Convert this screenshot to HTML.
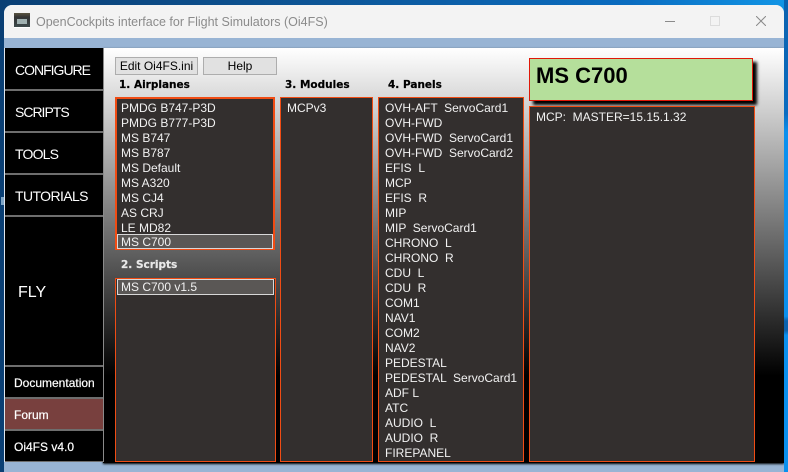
<!DOCTYPE html>
<html>
<head>
<meta charset="utf-8">
<style>
html,body{margin:0;padding:0}
body{width:788px;height:472px;overflow:hidden;position:relative;background:linear-gradient(90deg,#0a3f74 0,#0d5596 40%,#0a6cc0 80%,#1296e6 100%);font-family:"Liberation Sans",sans-serif}
div{position:absolute;box-sizing:border-box}
#rside{left:784px;top:0;width:4px;height:472px;background:linear-gradient(180deg,#0b62ae 0,#0a6cc0 24%,#0a90ee 28%,#0a90ee 67%,#0b62ae 68%,#0b62ae 70%,#0a90ee 71%,#0a90ee 100%)}
#win{left:4px;top:5px;width:780px;height:467px;background:#98b4d4;border-radius:8px 8px 0 0;overflow:hidden}
#title{left:0;top:0;width:780px;height:33px;background:#f3f3f3}
#ttext{left:32px;top:9px;font-size:12.5px;color:#8b8b8b;white-space:nowrap;line-height:16px}
#main{left:99px;top:43px;width:681px;height:415px;background:linear-gradient(180deg,#fff 0,#000 79%,#000 100%);box-shadow:0 1px 2px #000}
.nav{left:1px;width:98px;background:#000;color:#fff;font-size:14px;line-height:20px;padding-left:10px;white-space:nowrap;font-family:"Liberation Sans",sans-serif}
.small{font-size:12px;font-weight:normal;-webkit-text-stroke:.2px #fff}
.btn{background:#e1e1e1;border:1px solid #adadad;color:#000;font-size:12px;line-height:16px;text-align:center;white-space:nowrap}
.label{font-family:"DejaVu Sans",sans-serif;font-size:10.5px;font-weight:bold;white-space:nowrap;line-height:14px;color:#000;-webkit-text-stroke:.2px currentColor}
.box{background:#332f2e;border:1px solid #f04c14;color:#f2f2f2;font-size:12px;line-height:15px;white-space:pre}
.box span{display:block;height:15px;padding-left:6px}
.sel{background:#5a5755;border:1px solid #d8d8d8;color:#f2f2f2;font-size:12px;line-height:15px;padding-left:3px;white-space:pre}
</style>
</head>
<body>
<div id="rside"></div>
<div style="left:1px;top:197px;width:3px;height:8px;background:#7fa6c8"></div>
<div id="win">
  <div id="title"></div>
  <div style="left:10px;top:8px;width:16px;height:15px;background:linear-gradient(180deg,#5a5440 0,#333 30%,#3c4a4c 100%);border-bottom:1px solid #fff"></div>
  <div style="left:13px;top:14px;width:10px;height:5px;background:#9fb0b0"></div>
  <div id="ttext">OpenCockpits interface for Flight Simulators (Oi4FS)</div>
  <div style="left:661px;top:16px;width:10px;height:1px;background:#8a8a8a"></div>
  <div style="left:706px;top:11px;width:10px;height:10px;border:1px solid #dcdcdc"></div>
  <svg style="position:absolute;left:752px;top:11px" width="10" height="10" viewBox="0 0 10 10"><path d="M0 0L10 10M10 0L0 10" stroke="#8a8a8a" stroke-width="1" fill="none"/></svg>
  <div style="left:0;top:43px;width:1px;height:414px;background:#dfe6ee"></div>
  <div id="main"></div>
  <div style="left:1px;top:43px;width:98px;height:414px;background:#6e6e6e"></div>
  <div style="left:99px;top:43px;width:1px;height:414px;background:#8a8a8a"></div>
  <div class="nav" style="top:43px;height:41px;line-height:44px;letter-spacing:-1px">CONFIGURE</div>
  <div class="nav" style="top:86px;height:40px;line-height:42px;letter-spacing:-1px">SCRIPTS</div>
  <div class="nav" style="top:128px;height:40px;line-height:42px;letter-spacing:-.8px">TOOLS</div>
  <div class="nav" style="top:170px;height:40px;line-height:42px;letter-spacing:-.6px">TUTORIALS</div>
  <div class="nav" style="top:212px;height:148px;line-height:152px;font-size:16px;padding-left:13px">FLY</div>
  <div class="nav small" style="top:362px;height:30px;line-height:32px;padding-left:9px">Documentation</div>
  <div class="nav small" style="top:394px;height:30px;line-height:32px;padding-left:9px;background:#78403e">Forum</div>
  <div class="nav small" style="top:426px;height:30px;line-height:32px;padding-left:9px">Oi4FS v4.0</div>
</div>

<div class="btn" style="left:115px;top:57px;width:83px;height:18px">Edit Oi4FS.ini</div>
<div class="btn" style="left:203px;top:57px;width:74px;height:18px">Help</div>

<div class="label" style="left:119px;top:78px">1. Airplanes</div>
<div class="label" style="left:285px;top:78px">3. Modules</div>
<div class="label" style="left:388px;top:78px">4. Panels</div>
<div class="label" style="left:121px;top:258px;color:#e8e8e8">2. Scripts</div>

<div class="box" style="left:115px;top:97px;width:160px;height:153px;border-width:2px;padding-top:2px"><span style="padding-left:4px">PMDG B747-P3D</span><span style="padding-left:4px">PMDG B777-P3D</span><span style="padding-left:4px">MS B747</span><span style="padding-left:4px">MS B787</span><span style="padding-left:4px">MS Default</span><span style="padding-left:4px">MS A320</span><span style="padding-left:4px">MS CJ4</span><span style="padding-left:4px">AS CRJ</span><span style="padding-left:4px">LE MD82</span><div class="sel" style="left:0;top:135px;width:156px;height:15px">MS C700</div></div>

<div class="box" style="left:115px;top:278px;width:161px;height:184px"><div class="sel" style="left:1px;top:0;width:157px;height:16px;line-height:14px">MS C700 v1.5</div></div>

<div class="box" style="left:280px;top:97px;width:93px;height:365px;padding-top:3px"><span>MCPv3</span></div>

<div class="box" style="left:378px;top:97px;width:146px;height:365px;padding-top:3px"><span>OVH-AFT  ServoCard1</span><span>OVH-FWD</span><span>OVH-FWD  ServoCard1</span><span>OVH-FWD  ServoCard2</span><span>EFIS  L</span><span>MCP</span><span>EFIS  R</span><span>MIP</span><span>MIP  ServoCard1</span><span>CHRONO  L</span><span>CHRONO  R</span><span>CDU  L</span><span>CDU  R</span><span>COM1</span><span>NAV1</span><span>COM2</span><span>NAV2</span><span>PEDESTAL</span><span>PEDESTAL  ServoCard1</span><span>ADF L</span><span>ATC</span><span>AUDIO  L</span><span>AUDIO  R</span><span>FIREPANEL</span></div>

<div style="left:529px;top:58px;width:224px;height:43px;background:#b5df9b;border:1px solid #e01808;box-shadow:4px 4px 3px #000;color:#000;font-size:22px;font-weight:bold;line-height:34px;padding-left:6px;white-space:nowrap">MS C700</div>

<div class="box" style="left:529px;top:106px;width:226px;height:356px;padding-top:3px"><span>MCP:  MASTER=15.15.1.32</span></div>
</body>
</html>
